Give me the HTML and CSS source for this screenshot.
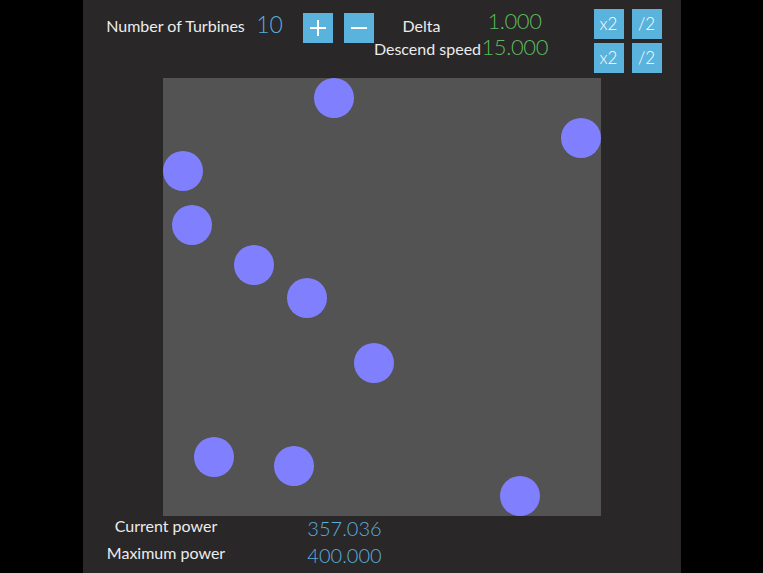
FILE: index.html
```html
<!DOCTYPE html>
<html>
<head>
<meta charset="utf-8">
<link rel="stylesheet" href="styles.css">
</head>
<body>
<div class="panel">
  <div class="topbar">
    <div class="turb-label">Number of Turbines</div>
    <div class="turb-value">10</div>
    <div class="btn btn-plus">
      <svg width="30" height="30" viewBox="0 0 30 30"><path d="M15 7v16M7 15h16" stroke="#fff" stroke-width="2" fill="none"/></svg>
    </div>
    <div class="btn btn-minus">
      <svg width="30" height="30" viewBox="0 0 30 30"><path d="M7 15h16" stroke="#fff" stroke-width="2" fill="none"/></svg>
    </div>
    <div class="params">
      <div class="p-label p-delta">Delta</div>
      <div class="p-value">1.000</div>
      <div class="p-label p-descend">Descend speed</div>
      <div class="p-value">15.000</div>
    </div>
    <div class="scale-btns">
      <div class="btn sbtn">x2</div>
      <div class="btn sbtn">/2</div>
      <div class="btn sbtn">x2</div>
      <div class="btn sbtn">/2</div>
    </div>
  </div>
  <div class="field">
    <div class="turbine" style="left:151px;top:0px"></div>
    <div class="turbine" style="left:398px;top:40px"></div>
    <div class="turbine" style="left:0px;top:73px"></div>
    <div class="turbine" style="left:9px;top:127px"></div>
    <div class="turbine" style="left:71px;top:167px"></div>
    <div class="turbine" style="left:124px;top:200px"></div>
    <div class="turbine" style="left:191px;top:265px"></div>
    <div class="turbine" style="left:31px;top:359px"></div>
    <div class="turbine" style="left:111px;top:368px"></div>
    <div class="turbine" style="left:337px;top:398px"></div>
  </div>
  <div class="stats">
    <div class="s-label">Current power</div>
    <div class="s-value">357.036</div>
    <div class="s-label">Maximum power</div>
    <div class="s-value">400.000</div>
  </div>
</div>
</body>
</html>
```
FILE: styles.css
```css
html, body {
  margin: 0;
  padding: 0;
  background: #000;
  height: 100%;
  overflow: hidden;
}
body {
  display: flex;
  justify-content: center;
  font-family: "Lato", "Open Sans", sans-serif;
  color: #ececec;
}
.panel {
  width: 598px;
  height: 573px;
  background: #292728;
  display: flex;
  flex-direction: column;
  align-items: center;
}
.topbar {
  width: 598px;
  height: 78px;
  display: flex;
  align-items: flex-start;
  box-sizing: border-box;
  padding-left: 23px;
}
.turb-label {
  width: 140px;
  margin-top: 16px;
  font-size: 16px;
  line-height: 20px;
  text-align: center;
  white-space: nowrap;
}
.turb-value {
  width: 48px;
  margin-top: 10px;
  font-size: 23px;
  line-height: 28px;
  text-align: center;
  color: #5aaedb;
  font-weight: 300;
}
.btn {
  width: 30px;
  height: 30px;
  background: #5ab3dd;
  color: #fff;
  display: flex;
  align-items: center;
  justify-content: center;
}
.btn-plus {
  margin-top: 13px;
  margin-left: 9px;
}
.btn-minus {
  margin-top: 13px;
  margin-left: 11px;
}
.params {
  display: grid;
  grid-template-columns: 108px 66px;
  grid-template-rows: 26px 30px;
  margin-top: 6px;
}
.p-label {
  font-size: 16px;
  line-height: 20px;
  text-align: center;
  white-space: nowrap;
}
.p-delta {
  padding-top: 10px;
  padding-right: 12px;
}
.p-descend {
  padding-top: 7px;
}
.p-value {
  padding-top: 1px;
  font-size: 22px;
  line-height: 27px;
  letter-spacing: -0.4px;
  text-align: center;
  color: #5cbb5c;
  font-weight: 300;
}
.scale-btns {
  display: grid;
  grid-template-columns: 30px 30px;
  grid-auto-rows: 30px;
  column-gap: 8px;
  row-gap: 4px;
  margin-top: 9px;
  margin-left: 46px;
}
.sbtn {
  font-size: 17px;
  line-height: 20px;
  font-weight: 300;
}
.field {
  position: relative;
  width: 438px;
  height: 438px;
  background: #535353;
  flex: none;
}
.turbine {
  position: absolute;
  width: 40px;
  height: 40px;
  border-radius: 50%;
  background: #8080ff;
}
.stats {
  width: 598px;
  display: grid;
  grid-template-columns: 167px 190px;
  grid-auto-rows: 27px;
}
.s-label {
  font-size: 16px;
  line-height: 20px;
  text-align: center;
  white-space: nowrap;
}
.s-value {
  font-size: 20px;
  line-height: 24px;
  text-align: center;
  color: #5aaedb;
  font-weight: 300;
}
```
